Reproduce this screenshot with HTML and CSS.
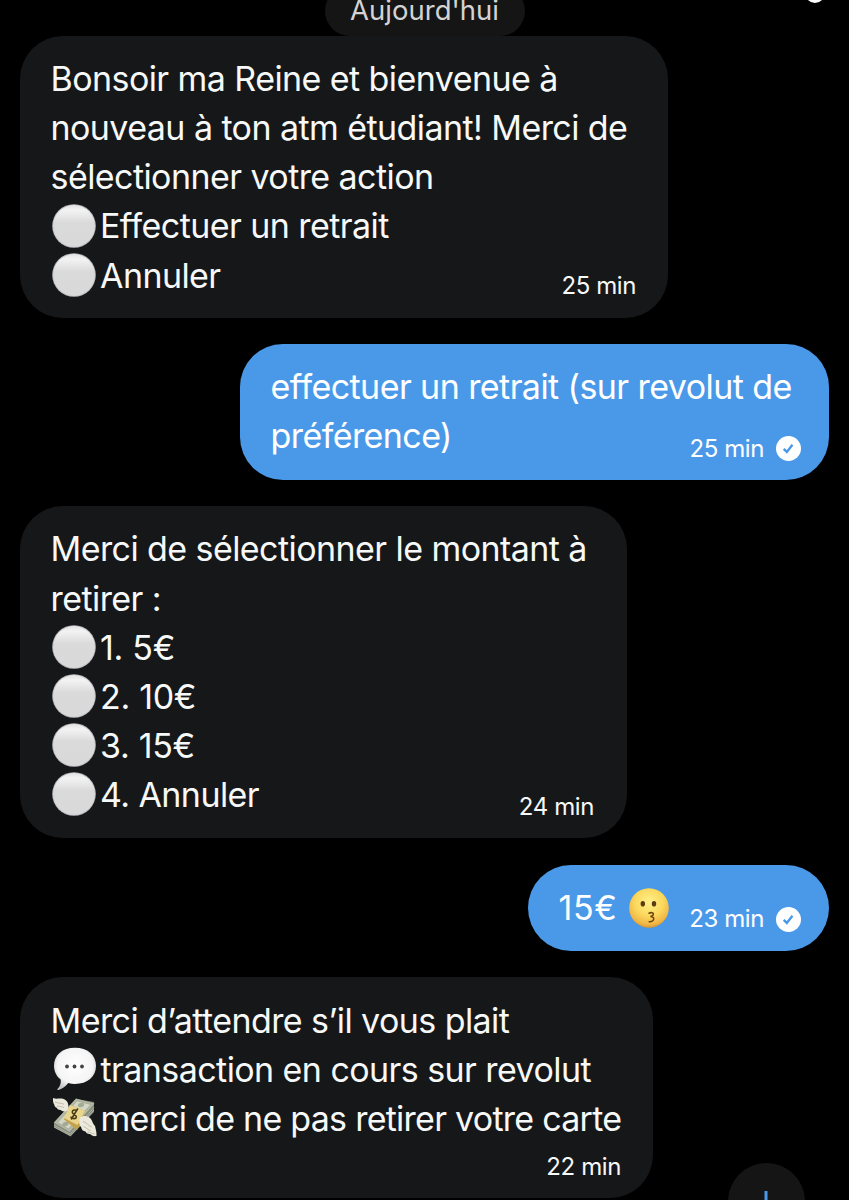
FILE: index.html
```html
<!DOCTYPE html>
<html lang="fr">

<head>
  <meta charset="UTF-8">
  <meta name="viewport" content="width=device-width, initial-scale=1.0">
  <title>Messages</title>
  <link rel="stylesheet" href="styles.css">
</head>

<body>
  <!-- shared icons -->
  <svg class="sprite" width="0" height="0">
    <defs>
      <linearGradient id="ballFill" x1="0" y1="0" x2="0" y2="1">
        <stop offset="0" stop-color="#e2e2e2"/>
        <stop offset="0.12" stop-color="#f3f3f3"/>
        <stop offset="0.42" stop-color="#dadada"/>
        <stop offset="1" stop-color="#d9d9d9"/>
      </linearGradient>
      <radialGradient id="faceFill" cx="0.5" cy="0.35" r="0.65">
        <stop offset="0" stop-color="#fff08a"/>
        <stop offset="0.55" stop-color="#fbd85c"/>
        <stop offset="0.88" stop-color="#efb546"/>
        <stop offset="1" stop-color="#d5952f"/>
      </radialGradient>
      <radialGradient id="bubbleFill" cx="0.5" cy="0.42" r="0.6">
        <stop offset="0" stop-color="#ffffff"/>
        <stop offset="0.7" stop-color="#f5f5f5"/>
        <stop offset="1" stop-color="#c4c4c4"/>
      </radialGradient>
      <symbol id="ball" viewBox="0 0 44 44">
        <circle cx="22" cy="22" r="21.8" fill="#bcbcc0"/>
        <circle cx="22" cy="22" r="20.9" fill="url(#ballFill)"/>
      </symbol>
      <symbol id="check" viewBox="0 0 24 24">
        <circle cx="12" cy="12" r="12" fill="#fff"/>
        <path d="M7.4 12.3l3 3 5.4-6.8" fill="none" stroke="#4a99e9" stroke-width="2.3"/>
      </symbol>
    </defs>
  </svg>

  <div class="chat">
    <div class="chat-top">
      <div class="day">Aujourd'hui</div>
      <div class="top-dot"></div>
    </div>

    <div class="bubble received first">
      <div class="text">
        <p>Bonsoir ma Reine et bienvenue à</p>
        <p>nouveau à ton atm étudiant! Merci de</p>
        <p>sélectionner votre action</p>
        <p><svg class="ball"><use href="#ball"/></svg>Effectuer un retrait</p>
        <p><svg class="ball"><use href="#ball"/></svg>Annuler</p>
      </div>
      <div class="time">25 min</div>
    </div>

    <div class="bubble sent second">
      <div class="text">
        <p>effectuer un retrait (sur revolut de</p>
        <p>préférence)</p>
      </div>
      <div class="time">25 min<svg class="check"><use href="#check"/></svg></div>
    </div>

    <div class="bubble received third">
      <div class="text">
        <p>Merci de sélectionner le montant à</p>
        <p>retirer :</p>
        <p class="amount"><svg class="ball"><use href="#ball"/></svg>1. 5€</p>
        <p class="amount"><svg class="ball"><use href="#ball"/></svg>2. 10€</p>
        <p class="amount"><svg class="ball"><use href="#ball"/></svg>3. 15€</p>
        <p><svg class="ball"><use href="#ball"/></svg>4. Annuler</p>
      </div>
      <div class="time">24 min</div>
    </div>

    <div class="bubble sent fourth">
      <div class="text">
        <p class="amount">15€
          <svg class="face" viewBox="0 0 40 40">
            <circle cx="20" cy="20" r="19.8" fill="url(#faceFill)"/>
            <ellipse cx="13.8" cy="15.8" rx="2.2" ry="2.8" fill="#5c3a12"/>
            <ellipse cx="25" cy="15.8" rx="2.2" ry="2.8" fill="#5c3a12"/>
            <path d="M20 25.2c2-1 4.6-.6 4.400 1-.1 1.400-1.800 1.900-3 2.300 1.800.1 3.500.8 3.300 2.500-.2 1.900-2.200 3-4.500 2.700" fill="none" stroke="#70430f" stroke-width="1.6" stroke-linecap="round"/>
          </svg>
        </p>
      </div>
      <div class="time">23 min<svg class="check"><use href="#check"/></svg></div>
    </div>

    <div class="bubble received fifth">
      <div class="text">
        <p>Merci d’attendre s’il vous plait</p>
        <p>
          <svg class="emoji" viewBox="0 0 44 44">
            <path d="M22 .8C34.5.8 43 8 43 18.8S34.5 37 22 37c-2.4 0-4.8-.3-6.8-.9C12.6 39.4 9 42.4 5.2 43.1 4.3 43.2 4 42.3 4.7 41.7 7 39.6 8 36.4 7.8 32.7 3.5 29.4 1 24.5 1 18.8 1 8 9.5.8 22 .8z" fill="url(#bubbleFill)"/>
            <circle cx="14" cy="19.5" r="1.9" fill="#444"/>
            <circle cx="21.5" cy="19.5" r="1.9" fill="#444"/>
            <circle cx="29" cy="19.5" r="1.9" fill="#444"/>
          </svg>transaction en cours sur revolut</p>
        <p class="last">
          <svg class="emoji" viewBox="0 0 44 44">
            <!-- notes -->
            <path d="M1 26.500L23 3l18 3v10L17.500 40.500 1 31.500z" fill="#858b7c"/>
            <path d="M1 26.500L23 2.500 41.500 7.500 16.500 36z" fill="#b4b9a6"/>
            <path d="M4.500 26.500L24 4.800l14 3.700L15.500 33z" fill="#d3d6c3" stroke="#8a9180" stroke-width=".5"/>
            <path d="M1 29l16 9L41 11.500M1 31l16.500 8.500L41 14" fill="none" stroke="#c8ccba" stroke-width=".6"/>
            <ellipse cx="28" cy="9" rx="3.2" ry="2" fill="#a3aa93" transform="rotate(-20 28 9)"/>
            <ellipse cx="12.500" cy="28" rx="3.2" ry="2" fill="#a3aa93" transform="rotate(-20 12.500 28)"/>
            <!-- paper band -->
            <path d="M17 9l15 6-6.500 16.500L24 34 11 23.500z" fill="#c4a24c"/>
            <path d="M17 9l15 6-7.500 14L11 22z" fill="#e9d58c"/>
            <path d="M24.500 14.800c-2.600-1.600-5.300-.8-5.200 1.500.1 2.200 4.400 2.300 4 4.800-.4 2.200-3.800 2-5.800-.4M24.800 12.500l-6.600 11" fill="none" stroke="#4b3c18" stroke-width="1.600"/>
            <!-- wings -->
            <path d="M0 2C4 4 8 1 12.500 4c3.300 2.600 3.500 6.800 2 10.500-3.500 1.700-5.500.8-6.800-.5-2-.1-3.200-.9-4-2.300-1.600-.6-2.200-1.500-2.300-3C.3 7.500-.3 4.800 0 2z" fill="#ebe8dc"/>
            <path d="M2 6c3.500 1.500 6 .8 9 2.300M4 10c2.500.8 4.500 0 7 1.800" fill="none" stroke="#b5b1a0" stroke-width=".8"/>
            <path d="M27 21.500c3.500-2.500 8.500-2 11 1.500 1.500 2.500 2 5 4 7 .8 3.800 1.800 6.500 1.500 10-3 .5-5-.5-6.500-2-2.500.3-3.700-1-4.500-2.500-2.500-.2-4-1.700-4.200-4-2.300-2.500-2.800-6-1.300-10z" fill="#ebe8dc"/>
            <path d="M30 25.500c3.500.5 5 4.500 9 5.500M30.500 30.500c2.500.5 4 3.500 7 4M34.500 36c2.500-.5 4 2 7 2" fill="none" stroke="#b5b1a0" stroke-width=".8"/>
          </svg>merci de ne pas retirer votre carte</p>
      </div>
      <div class="time">22 min</div>
    </div>

    <!-- scroll to bottom -->
    <div class="scroll-down">
      <svg width="76" height="76" viewBox="0 0 76 76">
        <path d="M38 28v22M28.5 40.5l9.5 9.5 9.5-9.5" fill="none" stroke="#4a99e9" stroke-width="3"/>
      </svg>
    </div>
  </div>
</body>

</html>
```
FILE: styles.css
```css
* {
  box-sizing: border-box;
  margin: 0;
  padding: 0;
}

body {
  background: #000;
  color: #f7f8f8;
  font-family: Inter, "Liberation Sans", sans-serif;
  overflow: hidden;
}

svg {
  display: inline-block;
  flex: none;
}

.sprite {
  position: absolute;
}

.chat {
  position: relative;
  display: flex;
  flex-direction: column;
  gap: 26.2px;
  width: 849px;
  height: 1200px;
  padding: 0 20px;
  overflow: hidden;
}

.chat-top {
  display: flex;
  flex: none;
  justify-content: center;
  align-items: flex-end;
  height: 36px;
  margin-bottom: -26.2px;
}

.day {
  width: 200px;
  height: 50px;
  border-radius: 25px;
  background: #151515;
  color: #d3d3d3;
  font-size: 27.5px;
  line-height: 49px;
  text-align: center;
}

.top-dot {
  position: absolute;
  top: -17px;
  left: 805px;
  width: 20px;
  height: 20px;
  border-radius: 50%;
  background: #fff;
}

.bubble {
  display: flex;
  flex: none;
  align-items: flex-end;
  padding: 18.4px 32px 18.4px 31px;
  border-radius: 43px;
}

.received {
  align-self: flex-start;
  background: #151719;
}

.sent {
  align-self: flex-end;
  padding-right: 28px;
  background: #4a99e9;
  color: #fff;
}

/* first lines may run above the time */
.text {
  flex: 1 1 0;
  min-width: 0;
  font-size: 34px;
  letter-spacing: -0.57px;
  line-height: 49.1px;
  white-space: nowrap;
}

.text p {
  display: flex;
  align-items: center;
  height: 49.1px;
  margin-left: -0.5px;
}

.text .amount {
  letter-spacing: -0.3px;
}

.text .last {
  letter-spacing: -0.74px;
}

.time {
  display: flex;
  flex: none;
  align-items: center;
  height: 28px;
  font-size: 24px;
  letter-spacing: -0.4px;
  line-height: 28px;
  white-space: nowrap;
}

.sent .time {
  margin-bottom: -1px;
}

.first {
  width: 648px;
  height: 282px;
}

.second {
  width: 589px;
  height: 136px;
}

.second .text {
  margin-bottom: 1.5px;
}

.third {
  width: 607px;
  height: 332px;
}

.third .text {
  margin-bottom: 1px;
}

.third .time {
  margin-right: 1px;
  margin-bottom: -1px;
}

.fourth {
  width: 301px;
  height: 86px;
}

.fourth .amount {
  letter-spacing: 0.6px;
}

.fifth {
  flex-direction: column;
  align-items: stretch;
  width: 633px;
  height: 221px;
  padding-top: 19px;
}

.fifth .text {
  flex: none;
}

.fifth .time {
  align-self: flex-end;
  margin-top: 10px;
}

.ball {
  width: 44px;
  height: 44px;
  margin: 0 4px 0 1.5px;
}

.emoji {
  width: 44px;
  height: 44px;
  margin: 0 4px 0 2px;
}

.face {
  width: 40px;
  height: 40px;
  margin-left: 12px;
}

.check {
  width: 25px;
  height: 25px;
  margin-left: 12px;
}

.scroll-down {
  position: absolute;
  top: 1163px;
  left: 728px;
  width: 77px;
  height: 77px;
  border-radius: 50%;
  background: #151515;
}
```
